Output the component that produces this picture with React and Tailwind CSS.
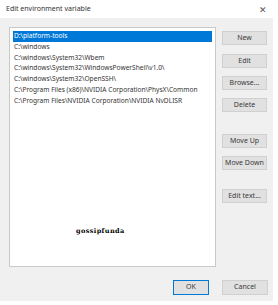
import React from "react";

const paths = [
  "D:\\platform-tools",
  "C:\\windows",
  "C:\\windows\\System32\\Wbem",
  "C:\\windows\\System32\\WindowsPowerShell\\v1.0\\",
  "C:\\windows\\System32\\OpenSSH\\",
  "C:\\Program Files (x86)\\NVIDIA Corporation\\PhysX\\Common",
  "C:\\Program Files\\NVIDIA Corporation\\NVIDIA NvDLISR",
];

const Btn = ({ children, className = "" }) => (
  <div
    className={`flex h-[14px] w-[45px] items-center justify-center border border-[#d0d0d0] bg-[#e1e1e1] text-[7px] text-[#3a3a3a] ${className}`}
  >
    {children}
  </div>
);

const App = () => {
  return (
    <div
      className="h-[305px] w-[278px] overflow-hidden bg-white"
      style={{ fontFamily: '"Noto Sans", "Liberation Sans", sans-serif' }}
    >
      <div className="flex h-[301px] w-[273px] flex-col bg-[#f0f0f0]">
        {/* title bar */}
        <div className="flex h-[18px] items-center justify-between bg-white pl-[6px] pr-[6px] text-[7px] text-[#333]">
          <span>Edit environment variable</span>
          <span className="text-[9px] leading-none text-[#555]">✕</span>
        </div>

        <div className="flex flex-1 flex-col pl-[9px] pt-[9px]">
          <div className="flex">
            <div className="relative h-[240px] w-[207px] border border-[#c9c9c9] bg-white px-[3px] pt-[3px]">
              {paths.map((p, i) => (
                <div
                  key={i}
                  className={`flex h-[10.8px] items-center whitespace-nowrap px-[1px] text-[6.6px] leading-none ${
                    i === 0 ? "bg-[#0078d7] text-white" : "text-[#333]"
                  }`}
                >
                  {p}
                </div>
              ))}
              <div
                className="absolute left-[66px] top-[199px] text-[6.5px] font-bold tracking-[0.4px] text-black"
                style={{ fontFamily: '"DejaVu Serif", serif' }}
              >
                gossipfunda
              </div>
            </div>

            <div className="ml-[6px] flex flex-col pt-[4px]">
              <Btn>New</Btn>
              <Btn className="mt-[9px]">Edit</Btn>
              <Btn className="mt-[8px]">Browse...</Btn>
              <Btn className="mt-[8px]">Delete</Btn>
              <Btn className="mt-[22px]">Move Up</Btn>
              <Btn className="mt-[8px]">Move Down</Btn>
              <Btn className="mt-[19px]">Edit text...</Btn>
            </div>
          </div>

          <div className="mt-[13px] flex justify-end gap-[13px] pr-[5px]">
            <div className="flex h-[15px] w-[36px] items-center justify-center border border-[#0078d7] bg-[#e1e1e1] text-[7px] text-[#3a3a3a]">
              OK
            </div>
            <div className="flex h-[15px] w-[46px] items-center justify-center border border-[#d0d0d0] bg-[#e1e1e1] text-[7px] text-[#3a3a3a]">
              Cancel
            </div>
          </div>
        </div>
      </div>
    </div>
  );
};

export default App;
